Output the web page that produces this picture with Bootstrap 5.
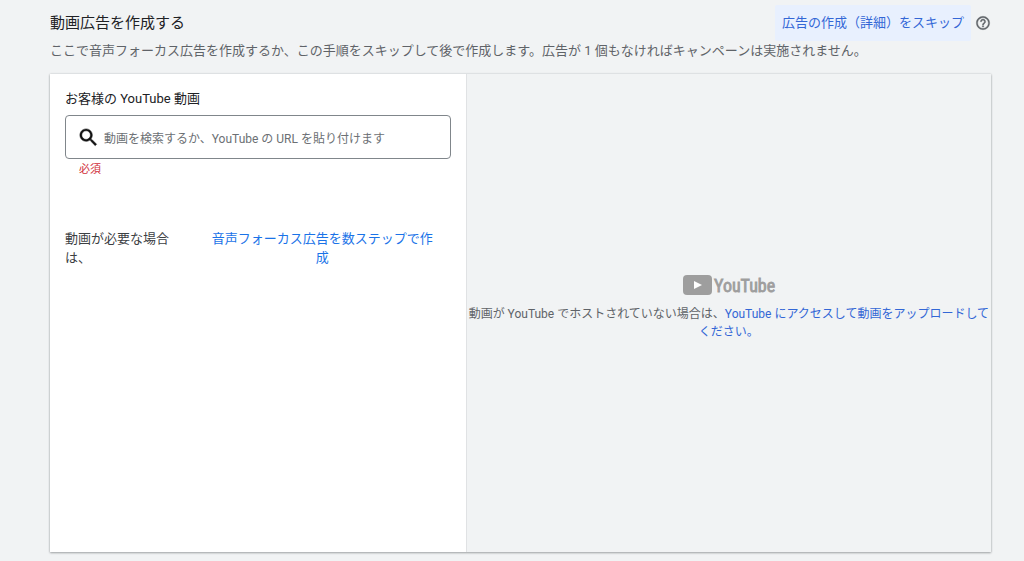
<!DOCTYPE html>
<html lang="ja">
<head>
<meta charset="utf-8">
<meta name="viewport" content="width=device-width, initial-scale=1">
<title>動画広告を作成する</title>
<link href="https://cdn.jsdelivr.net/npm/bootstrap@5.3.0/dist/css/bootstrap.min.css" rel="stylesheet">
<style>
  body { background: #f1f3f4; color: #3c4043; font: 13px/19px Roboto, "Noto Sans CJK JP", sans-serif; }
  a { color: #1a73e8; text-decoration: none; }
  .page { padding: 5px 33px 9px 50px; }
  .page-title { font-size: 15px; line-height: 36px; font-weight: 400; color: #202124; }
  .page-lead { color: #5f6368; }
  .btn-skip { --bs-btn-padding-x: 7px; --bs-btn-padding-y: 0px; --bs-btn-font-size: 13px; --bs-btn-line-height: 36px; --bs-btn-border-width: 0; --bs-btn-border-radius: 2px;
    --bs-btn-color: #3367d6; --bs-btn-bg: #e8f0fe; --bs-btn-hover-color: #3367d6; --bs-btn-hover-bg: #d2e3fc; }
  .panel { display: grid; grid-template-columns: minmax(0, 31fr) minmax(0, 39fr); margin-top: 14px; min-height: calc(100vh - 83px);
    box-shadow: 0 1px 2px rgba(60,64,67,.4), 0 0 2px rgba(60,64,67,.2); }
  .picker { background: #fff; padding: 15px; border-right: 1px solid #e0e2e4; }
  .picker-label { color: #202124; line-height: 20px; margin-bottom: 6px; }
  .search-box { height: 44px; border: 1px solid #80868b; border-radius: 4px; padding: 0 11px; }
  .search-box .form-control { font-size: 12px; line-height: 20px; color: #3c4043; padding: 4px 0 0; }
  .search-box .form-control::placeholder { color: #6c7074; }
  .required { font-size: 11px; line-height: 22px; color: #d02f3a; padding-left: 14px; }
  .need { margin-top: 48px; gap: 32px; }
  .need-text { flex: 0 0 112px; }
  .need-link { flex: 1; padding-right: 15px; }
  .host { font-size: 12px; line-height: 18px; color: #5f6368; padding-bottom: 12px; }
  .host a { color: #3367d6; }
  .logo-word { font: 400 18px "Roboto Condensed", "Liberation Sans Narrow", sans-serif; fill: #9e9e9e; stroke: #9e9e9e; }
</style>
</head>
<body>
<main class="page">
  <header>
    <div class="d-flex align-items-center justify-content-between">
      <h1 class="page-title mb-0">動画広告を作成する</h1>
      <div class="d-flex align-items-center gap-1">
        <button type="button" class="btn btn-skip">広告の作成（詳細）をスキップ</button>
        <button type="button" class="btn p-0 border-0 d-flex" aria-label="ヘルプ">
          <svg width="16" height="16" viewBox="0 0 24 24" fill="#5f6368" stroke="#5f6368" stroke-width=".5"><path d="M11 18h2v-2h-2v2zm1-16C6.480 2 2 6.480 2 12s4.480 10 10 10 10-4.480 10-10S17.520 2 12 2zm0 18c-4.410 0-8-3.590-8-8s3.590-8 8-8 8 3.590 8 8-3.590 8-8 8zm0-14c-2.210 0-4 1.790-4 4h2c0-1.100.9-2 2-2s2 .9 2 2c0 2-3 1.750-3 5h2c0-2.250 3-2.500 3-5 0-2.210-1.790-4-4-4z"/></svg>
        </button>
      </div>
    </div>
    <p class="page-lead mb-0">ここで音声フォーカス広告を作成するか、この手順をスキップして後で作成します。広告が 1 個もなければキャンペーンは実施されません。</p>
  </header>

  <div class="panel">
    <section class="picker">
      <label class="picker-label d-block" for="video-search">お客様の YouTube 動画</label>
      <div class="search-box d-flex align-items-center">
        <svg class="flex-shrink-0 me-1" width="23" height="23" viewBox="0 0 24 24" fill="#111" stroke="#111"><path d="M15.500 14h-.79l-.28-.27C15.410 12.590 16 11.110 16 9.500 16 5.910 13.090 3 9.500 3S3 5.910 3 9.500 5.910 16 9.500 16c1.610 0 3.090-.59 4.230-1.570l.27.28v.79l5 4.990L20.490 19l-4.990-5zm-6 0C7.010 14 5 11.990 5 9.500S7.010 5 9.500 5 14 7.010 14 9.500 11.990 14 9.500 14z" stroke-width=".5"/></svg>
        <input id="video-search" type="text" class="form-control border-0 shadow-none bg-transparent" placeholder="動画を検索するか、YouTube の URL を貼り付けます" aria-describedby="video-required">
      </div>
      <div id="video-required" class="required">必須</div>
      <div class="need d-flex">
        <div class="need-text">動画が必要な場合は、</div>
        <a href="#" class="need-link text-center">音声フォーカス広告を数ステップで作成</a>
      </div>
    </section>

    <section class="host d-flex flex-column align-items-center justify-content-center text-center">
      <svg width="94" height="24" viewBox="0 0 94 24" role="img" aria-label="YouTube">
        <rect x="1" y="2" width="29" height="20" rx="4" fill="#9e9e9e"/>
        <path d="M12 8v8l8-4z" fill="#fff"/>
        <text class="logo-word" x="32" y="19" stroke-width=".8">YouTube</text>
      </svg>
      <div class="pt-1 mt-1">動画が YouTube でホストされていない場合は、<a href="#">YouTube にアクセスして動画をアップロードしてください。</a></div>
    </section>
  </div>
</main>
<script src="https://cdn.jsdelivr.net/npm/bootstrap@5.3.0/dist/js/bootstrap.bundle.min.js"></script>
</body>
</html>
